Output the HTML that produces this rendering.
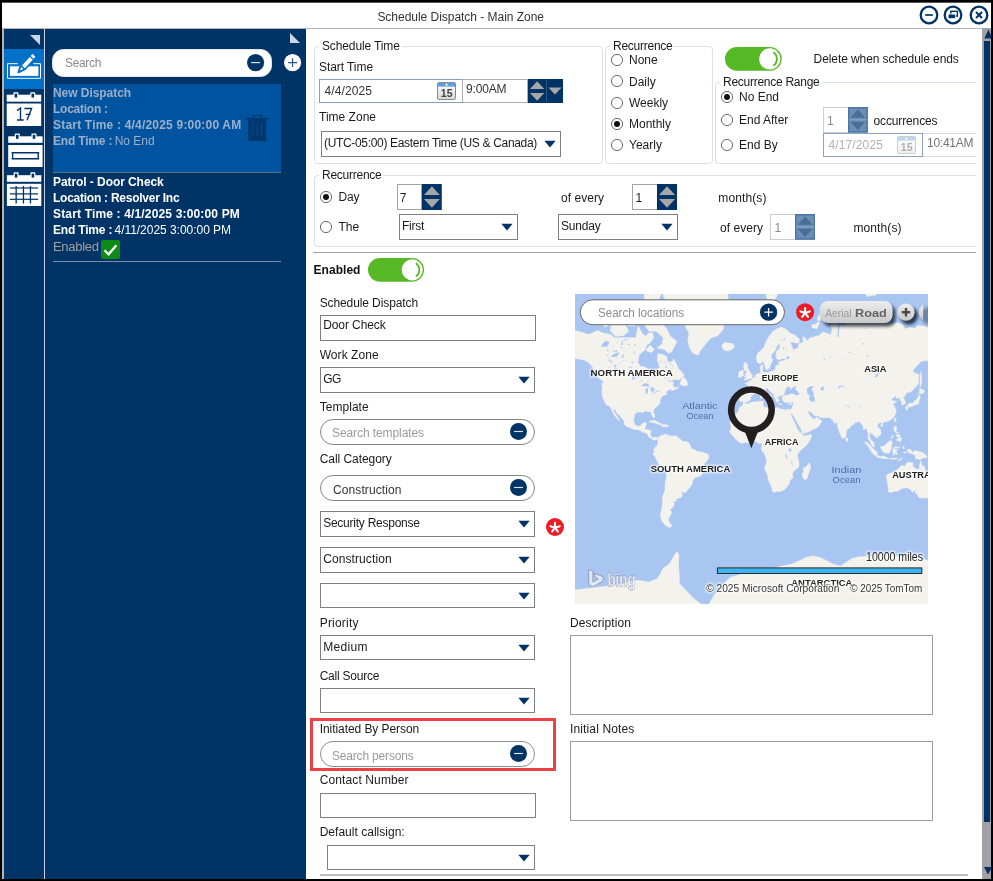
<!DOCTYPE html>
<html><head><meta charset="utf-8"><title>Schedule Dispatch - Main Zone</title>
<style>
html,body{margin:0;padding:0;}
body{width:993px;height:881px;background:#000;overflow:hidden;position:relative;font-family:"Liberation Sans",sans-serif;}
.a{position:absolute;display:block;}
svg{will-change:transform;}
.t{position:absolute;white-space:nowrap;font-family:"Liberation Sans",sans-serif;}
#tx{position:absolute;left:0;top:0;width:975.5px;height:881px;overflow:hidden;will-change:transform;transform:translateZ(0);}
</style></head><body>
<div class="a" style="left:2px;top:3px;width:989px;height:876px;background:#fff;"></div>
<div class="a" style="left:2px;top:2px;width:989px;height:1px;background:#555;"></div>
<div class="a" style="left:2px;top:28px;width:989px;height:1px;background:#b4b4b4;"></div>
<svg class="a" style="left:917.6px;top:3.5px" width="22" height="22" viewBox="-11 -11 22 22"><circle r="8.3" fill="#fff" stroke="#003366" stroke-width="2.3"/><line x1="-3.8" x2="3.8" y1="0" y2="0" stroke="#003366" stroke-width="1.7"/></svg>
<svg class="a" style="left:942.4px;top:3.5px" width="22" height="22" viewBox="-11 -11 22 22"><circle r="8.3" fill="#fff" stroke="#003366" stroke-width="2.3"/><rect x="-2.2" y="-3.7" width="6.6" height="4.8" fill="none" stroke="#003366" stroke-width="1.4"/><rect x="-4.9" y="-0.9" width="7.2" height="4.5" fill="#003366" stroke="#fff" stroke-width="0.7"/></svg>
<svg class="a" style="left:968.4px;top:3.5px" width="22" height="22" viewBox="-11 -11 22 22"><circle r="8.3" fill="#fff" stroke="#003366" stroke-width="2.3"/><path d="M-3 -3 L3 3 M3 -3 L-3 3" stroke="#003366" stroke-width="2"/></svg>
<div class="a" style="left:2px;top:28px;width:2px;height:851px;background:#b4b4b4;"></div>
<div class="a" style="left:4px;top:29px;width:302px;height:850px;background:#003366;"></div>
<div class="a" style="left:44px;top:29px;width:1px;height:850px;background:#c9d0e6;"></div>
<svg class="a" style="left:29px;top:34px" width="12" height="12" viewBox="29 34 12 12"><path d="M30 35 L40 35 L40 45 Z" fill="#cdd6e2"/></svg>
<div class="a" style="left:4px;top:49px;width:40px;height:40px;background:#0070c8;"></div>
<svg class="a" style="left:4px;top:49px" width="40" height="40" viewBox="4 49 40 40">
<path d="M17.8 63.7 H7.5 V78.3 H40.5 V63.7 H33.2" fill="none" stroke="#fff" stroke-width="1"/>
<rect x="9.9" y="66.3" width="28.5" height="9.6" fill="#fff"/>
<g transform="translate(18.8 71.8) rotate(-47.3)">
<path d="M-0.6 0 L5.6 -2.6 L23.2 -2.6 L23.2 2.6 L5.6 2.6 Z" fill="#0070c8" stroke="#0070c8" stroke-width="2" stroke-linejoin="round"/>
<path d="M1.6 0 L5.2 -1.5 L5.2 1.5 Z" fill="#fff"/>
<rect x="6.8" y="-2" width="11.6" height="4" fill="#fff"/>
<rect x="19.6" y="-2" width="2.8" height="4" fill="#fff"/>
</g>
</svg>
<svg class="a" style="left:4px;top:89px" width="40" height="120" viewBox="4 89 40 120"><rect x="6.7" y="94.7" width="34.5" height="7.0" fill="#fff"/><rect x="6.7" y="103.5" width="34.5" height="22.5" fill="#fff"/><rect x="13.4" y="92.2" width="5" height="3.5" rx="0.8" fill="#fff"/><rect x="14.6" y="93.60000000000001" width="2.6" height="4" fill="#003366"/><rect x="30.3" y="92.2" width="5" height="3.5" rx="0.8" fill="#fff"/><rect x="31.5" y="93.60000000000001" width="2.6" height="4" fill="#003366"/><path d="M17 110.6 L20.5 108 V120 M17 120 H23.7 M24.4 108.5 H31.6 L27 120.3 M25.8 114.4 H30.6" fill="none" stroke="#003366" stroke-width="1.35"/><rect x="8.2" y="136.3" width="34.400000000000006" height="6.5" fill="#fff"/><rect x="8.2" y="145" width="34.400000000000006" height="22" fill="#fff"/><rect x="14.8" y="133.4" width="5" height="3.9000000000000057" rx="0.8" fill="#fff"/><rect x="16.0" y="134.8" width="2.6" height="4" fill="#003366"/><rect x="31.5" y="133.4" width="5" height="3.9000000000000057" rx="0.8" fill="#fff"/><rect x="32.7" y="134.8" width="2.6" height="4" fill="#003366"/><path d="M11.6 152.7 H39.2 M11.6 158.7 H39.2 M12.6 152.7 V158.7 M38.2 152.7 V158.7" fill="none" stroke="#003366" stroke-width="1.4"/><rect x="6.9" y="175.2" width="34.4" height="6.600000000000023" fill="#fff"/><rect x="6.9" y="183.8" width="34.4" height="22.19999999999999" fill="#fff"/><rect x="13.6" y="172.2" width="5" height="4.0" rx="0.8" fill="#fff"/><rect x="14.799999999999999" y="173.6" width="2.6" height="4" fill="#003366"/><rect x="30.4" y="172.2" width="5" height="4.0" rx="0.8" fill="#fff"/><rect x="31.599999999999998" y="173.6" width="2.6" height="4" fill="#003366"/><rect x="15.500000000000002" y="186" width="1.3" height="17.5" fill="#003366"/><rect x="22.799999999999997" y="186" width="1.3" height="17.5" fill="#003366"/><rect x="29.799999999999997" y="186" width="1.3" height="17.5" fill="#003366"/><rect x="9.9" y="187.4" width="28.2" height="1.2" fill="#003366"/><rect x="9.9" y="193.3" width="28.2" height="1.2" fill="#003366"/><rect x="9.9" y="198.70000000000002" width="28.2" height="1.2" fill="#003366"/></svg>
<svg class="a" style="left:289px;top:32px" width="12" height="12" viewBox="289 32 12 12"><path d="M290 33 L300 43 L290 43 Z" fill="#cdd6e2"/></svg>
<div class="a" style="left:52px;top:49px;width:220px;height:28px;border:1px solid #e8e8e8;background:#fff;box-sizing:border-box;border-radius:11.5px;"></div>
<svg class="a" style="left:246.0px;top:53.4px" width="19.2" height="19.2" viewBox="-9.6 -9.6 19.2 19.2"><circle r="8.6" fill="#003366"/><line x1="-4.47" y1="0" x2="4.47" y2="0" stroke="#e3e9f2" stroke-width="1.15"/></svg>
<svg class="a" style="left:283.0px;top:53.4px" width="19.2" height="19.2" viewBox="-9.6 -9.6 19.2 19.2"><circle r="8.6" fill="#fff"/><path d="M-4.47 0 H4.47 M0 -4.47 V4.47" stroke="#2b5587" stroke-width="1.15" fill="none"/></svg>
<div class="a" style="left:53px;top:84px;width:228px;height:88px;background:#00539f;"></div>
<svg class="a" style="left:245px;top:114px" width="25" height="28" viewBox="245 114 25 28">
<rect x="245.4" y="117.9" width="23.6" height="1.3" fill="#00376f"/>
<rect x="253.3" y="115.6" width="8.4" height="3" fill="none" stroke="#00376f" stroke-width="1.1"/>
<rect x="248.2" y="119.2" width="17.9" height="21.8" fill="#00376f"/>
<path d="M253 122.6 V135.6 M257.2 122.6 V135.6 M261.4 122.6 V135.6" stroke="#004c90" stroke-width="1.1"/>
</svg>
<div class="a" style="left:53px;top:172px;width:228px;height:1px;background:#5f7186;"></div>
<svg class="a" style="left:101px;top:239.5px" width="19" height="19" viewBox="0 0 19 19"><rect width="19" height="19" rx="2" fill="#0e8a16"/><path d="M3.6 10.2 L7.6 14.2 L15.4 5.2" fill="none" stroke="#fff" stroke-width="2.3"/></svg>
<div class="a" style="left:53px;top:260.5px;width:228px;height:1.0px;background:#7d8fa8;"></div>
<div class="a" id="main" style="left:306px;top:28px;width:669.5px;height:851px;overflow:hidden"><div class="a" style="left:-306px;top:-28px;width:993px;height:881px">
<div class="a" style="left:314px;top:46px;width:289px;height:118px;border:1px solid #d9e2ea;border-radius:4px;box-sizing:border-box;"></div><div class="a" style="left:319px;top:45px;width:83px;height:3px;background:#fff;"></div>
<div class="a" style="left:319px;top:79px;width:144px;height:24px;border:1px solid #8c9fbd;background:#fff;box-sizing:border-box;"></div>
<svg class="a" style="left:437.3px;top:81.8px;" width="19" height="18" viewBox="0 0 19 18">
<defs><linearGradient id="cg437" x1="0" y1="0" x2="0" y2="1"><stop offset="0" stop-color="#fff"/><stop offset="1" stop-color="#d8d8d8"/></linearGradient></defs>
<rect x="0.5" y="0.5" width="18" height="17" rx="1.5" fill="url(#cg437)" stroke="#8a8a8a"/>
<rect x="1" y="1" width="17" height="3.6" fill="#5f9fe0"/>
<circle cx="9.5" cy="2.7" r="1.1" fill="#fff"/>
<text x="9.7" y="15" font-family="Liberation Sans" font-size="10.5" font-weight="700" fill="#444" text-anchor="middle">15</text>
</svg>
<div class="a" style="left:462px;top:79px;width:66px;height:24px;border:1px solid #abadb3;background:#fff;box-sizing:border-box;"></div>
<svg class="a" style="left:527.7px;top:79px" width="18.299999999999955" height="24" viewBox="0 0 18.299999999999955 24"><rect width="18.299999999999955" height="24" fill="#003366"/><path d="M2 10.0 L16.299999999999955 10.0 L9.149999999999977 2.2 Z" fill="#a6a6a6"/><path d="M2 14.0 L16.299999999999955 14.0 L9.149999999999977 21.8 Z" fill="#a6a6a6"/></svg>
<svg class="a" style="left:546px;top:79px" width="17" height="24" viewBox="0 0 17 24"><rect width="17" height="24" fill="#003366"/><rect width="1" height="24" fill="#2d5688"/><path d="M2.4 8.4 L15.6 8.4 L9 15.6 Z" fill="#a6a6a6"/></svg>
<div class="a" style="left:320.5px;top:131px;width:240.5px;height:25.5px;border:1px solid #7f7f7f;background:#fff;box-sizing:border-box;"></div><svg class="a" style="left:544px;top:139.75px" width="12" height="8" viewBox="0 0 12 8"><path d="M0.3 0.8 L11.7 0.8 L6 7.4 Z" fill="#003366"/></svg>
<div class="a" style="left:605px;top:46px;width:108px;height:118px;border:1px solid #d9e2ea;border-radius:4px;box-sizing:border-box;"></div><div class="a" style="left:610px;top:45px;width:64px;height:3px;background:#fff;"></div>
<svg class="a" style="left:609.5px;top:52.8px" width="14" height="14" viewBox="-7 -7 14 14"><circle r="5.6" fill="#fff" stroke="#5a5a5a" stroke-width="0.9"/></svg>
<svg class="a" style="left:609.5px;top:74.2px" width="14" height="14" viewBox="-7 -7 14 14"><circle r="5.6" fill="#fff" stroke="#5a5a5a" stroke-width="0.9"/></svg>
<svg class="a" style="left:609.5px;top:95.5px" width="14" height="14" viewBox="-7 -7 14 14"><circle r="5.6" fill="#fff" stroke="#5a5a5a" stroke-width="0.9"/></svg>
<svg class="a" style="left:609.5px;top:116.7px" width="14" height="14" viewBox="-7 -7 14 14"><circle r="5.6" fill="#fff" stroke="#5a5a5a" stroke-width="0.9"/><circle r="3" fill="#111"/></svg>
<svg class="a" style="left:609.5px;top:137.9px" width="14" height="14" viewBox="-7 -7 14 14"><circle r="5.6" fill="#fff" stroke="#5a5a5a" stroke-width="0.9"/></svg>
<svg class="a" style="left:725.3px;top:47px" width="56.700000000000045" height="23.799999999999997" viewBox="0 0 56.700000000000045 23.799999999999997"><rect width="56.700000000000045" height="23.799999999999997" rx="11.899999999999999" fill="#56b824"/><circle cx="44.80000000000005" cy="11.899999999999999" r="10.599999999999998" fill="#fff"/><path d="M48.40000000000005 5.299999999999999 A 8 8 0 0 1 48.40000000000005 18.5" fill="none" stroke="#56b824" stroke-width="1.8"/></svg>
<div class="a" style="left:715px;top:82px;width:275px;height:82px;border:1px solid #d9e2ea;border-radius:4px;box-sizing:border-box;border-right:none;border-top-right-radius:0;border-bottom-right-radius:0;"></div><div class="a" style="left:720px;top:81px;width:102px;height:3px;background:#fff;"></div>
<svg class="a" style="left:719.5px;top:89.5px" width="14" height="14" viewBox="-7 -7 14 14"><circle r="5.6" fill="#fff" stroke="#5a5a5a" stroke-width="0.9"/><circle r="3" fill="#111"/></svg>
<svg class="a" style="left:719.5px;top:113px" width="14" height="14" viewBox="-7 -7 14 14"><circle r="5.6" fill="#fff" stroke="#5a5a5a" stroke-width="0.9"/></svg>
<svg class="a" style="left:719.5px;top:137.5px" width="14" height="14" viewBox="-7 -7 14 14"><circle r="5.6" fill="#fff" stroke="#5a5a5a" stroke-width="0.9"/></svg>
<div class="a" style="left:823px;top:107.2px;width:26px;height:25.60000000000001px;border:1px solid #c9cdd4;background:#fff;box-sizing:border-box;"></div>
<svg class="a" style="left:848.4px;top:107.2px" width="19.800000000000068" height="25.60000000000001" viewBox="0 0 19.800000000000068 25.60000000000001"><rect width="19.800000000000068" height="25.60000000000001" fill="#6c8db6"/><rect x="0.75" y="0.75" width="18.300000000000068" height="24.10000000000001" fill="none" stroke="#4b76a6" stroke-width="1.5"/><rect x="1" y="12.200000000000005" width="17.800000000000068" height="1.2" fill="#86a3c6"/><path d="M2.6 10.800000000000004 L17.200000000000067 10.800000000000004 L9.900000000000034 2.6 Z" fill="#4a6c96"/><path d="M2.6 14.800000000000004 L17.200000000000067 14.800000000000004 L9.900000000000034 23.000000000000007 Z" fill="#4a6c96"/></svg>
<div class="a" style="left:823px;top:133px;width:100px;height:23.5px;border:1px solid #8ea2be;background:#fff;box-sizing:border-box;"></div>
<svg class="a" style="left:897.3px;top:135.6px;opacity:.42;" width="19" height="18" viewBox="0 0 19 18">
<defs><linearGradient id="cg897" x1="0" y1="0" x2="0" y2="1"><stop offset="0" stop-color="#fff"/><stop offset="1" stop-color="#d8d8d8"/></linearGradient></defs>
<rect x="0.5" y="0.5" width="18" height="17" rx="1.5" fill="url(#cg897)" stroke="#8a8a8a"/>
<rect x="1" y="1" width="17" height="3.6" fill="#5f9fe0"/>
<circle cx="9.5" cy="2.7" r="1.1" fill="#fff"/>
<text x="9.7" y="15" font-family="Liberation Sans" font-size="10.5" font-weight="700" fill="#444" text-anchor="middle">15</text>
</svg>
<div class="a" style="left:923px;top:133px;width:67px;height:1px;background:#d6d9de;"></div>
<div class="a" style="left:923px;top:155.5px;width:67px;height:1.0px;background:#d6d9de;"></div>
<div class="a" style="left:314px;top:175px;width:676px;height:71.5px;border:1px solid #d9e2ea;border-radius:4px;box-sizing:border-box;border-right:none;border-top-right-radius:0;border-bottom-right-radius:0;"></div><div class="a" style="left:319px;top:174px;width:64px;height:3px;background:#fff;"></div>
<svg class="a" style="left:319px;top:189.5px" width="14" height="14" viewBox="-7 -7 14 14"><circle r="5.6" fill="#fff" stroke="#5a5a5a" stroke-width="0.9"/><circle r="3" fill="#111"/></svg>
<svg class="a" style="left:319px;top:219.5px" width="14" height="14" viewBox="-7 -7 14 14"><circle r="5.6" fill="#fff" stroke="#5a5a5a" stroke-width="0.9"/></svg>
<div class="a" style="left:397px;top:184px;width:25px;height:26px;border:1px solid #a3a3a3;background:#fff;box-sizing:border-box;"></div>
<svg class="a" style="left:421.6px;top:184px" width="19.799999999999955" height="26" viewBox="0 0 19.799999999999955 26"><rect width="19.799999999999955" height="26" fill="#003366"/><path d="M2 11.0 L17.799999999999955 11.0 L9.899999999999977 2.2 Z" fill="#a6a6a6"/><path d="M2 15.0 L17.799999999999955 15.0 L9.899999999999977 23.8 Z" fill="#a6a6a6"/></svg>
<div class="a" style="left:398.5px;top:214px;width:119.70000000000005px;height:26px;border:1px solid #7f7f7f;background:#fff;box-sizing:border-box;"></div><svg class="a" style="left:501.20000000000005px;top:223.0px" width="12" height="8" viewBox="0 0 12 8"><path d="M0.3 0.8 L11.7 0.8 L6 7.4 Z" fill="#003366"/></svg>
<div class="a" style="left:632.3px;top:184px;width:25.700000000000045px;height:26px;border:1px solid #a3a3a3;background:#fff;box-sizing:border-box;"></div>
<svg class="a" style="left:657.3px;top:184px" width="20.100000000000023" height="26" viewBox="0 0 20.100000000000023 26"><rect width="20.100000000000023" height="26" fill="#003366"/><path d="M2 11.0 L18.100000000000023 11.0 L10.050000000000011 2.2 Z" fill="#a6a6a6"/><path d="M2 15.0 L18.100000000000023 15.0 L10.050000000000011 23.8 Z" fill="#a6a6a6"/></svg>
<div class="a" style="left:557.7px;top:214px;width:120.09999999999991px;height:26px;border:1px solid #7f7f7f;background:#fff;box-sizing:border-box;"></div><svg class="a" style="left:660.8px;top:223.0px" width="12" height="8" viewBox="0 0 12 8"><path d="M0.3 0.8 L11.7 0.8 L6 7.4 Z" fill="#003366"/></svg>
<div class="a" style="left:770px;top:214px;width:26px;height:25.69999999999999px;border:1px solid #c9cdd4;background:#fff;box-sizing:border-box;"></div>
<svg class="a" style="left:795px;top:214px" width="20.200000000000045" height="25.69999999999999" viewBox="0 0 20.200000000000045 25.69999999999999"><rect width="20.200000000000045" height="25.69999999999999" fill="#6c8db6"/><rect x="0.75" y="0.75" width="18.700000000000045" height="24.19999999999999" fill="none" stroke="#4b76a6" stroke-width="1.5"/><rect x="1" y="12.249999999999995" width="18.200000000000045" height="1.2" fill="#86a3c6"/><path d="M2.6 10.849999999999994 L17.600000000000044 10.849999999999994 L10.100000000000023 2.6 Z" fill="#4a6c96"/><path d="M2.6 14.849999999999994 L17.600000000000044 14.849999999999994 L10.100000000000023 23.099999999999987 Z" fill="#4a6c96"/></svg>
<div class="a" style="left:313px;top:251.5px;width:677px;height:1.5px;background:#a3a3a3;"></div>
<svg class="a" style="left:367.6px;top:257.5px" width="56.099999999999966" height="23.69999999999999" viewBox="0 0 56.099999999999966 23.69999999999999"><rect width="56.099999999999966" height="23.69999999999999" rx="11.849999999999994" fill="#56b824"/><circle cx="44.24999999999997" cy="11.849999999999994" r="10.549999999999994" fill="#fff"/><path d="M47.84999999999997 5.249999999999995 A 8 8 0 0 1 47.84999999999997 18.449999999999996" fill="none" stroke="#56b824" stroke-width="1.8"/></svg>
<div class="a" style="left:319.7px;top:315.3px;width:215.90000000000003px;height:25.30000000000001px;border:1px solid #7f7f7f;background:#fff;box-sizing:border-box;"></div>
<div class="a" style="left:319.7px;top:367.4px;width:215.59999999999997px;height:25.400000000000034px;border:1px solid #7f7f7f;background:#fff;box-sizing:border-box;"></div><svg class="a" style="left:518.3px;top:376.1px" width="12" height="8" viewBox="0 0 12 8"><path d="M0.3 0.8 L11.7 0.8 L6 7.4 Z" fill="#003366"/></svg>
<div class="a" style="left:320px;top:419px;width:215.29999999999995px;height:26px;border:1px solid #858585;background:#fff;box-sizing:border-box;border-radius:13.0px;"></div>
<svg class="a" style="left:509.0px;top:422.0px" width="19.0" height="19.0" viewBox="-9.5 -9.5 19.0 19.0"><circle r="8.5" fill="#003366"/><line x1="-4.42" y1="0" x2="4.42" y2="0" stroke="#e3e9f2" stroke-width="1.15"/></svg>
<div class="a" style="left:320px;top:475px;width:215.29999999999995px;height:26px;border:1px solid #858585;background:#fff;box-sizing:border-box;border-radius:13.0px;"></div>
<svg class="a" style="left:509.0px;top:478.3px" width="19.0" height="19.0" viewBox="-9.5 -9.5 19.0 19.0"><circle r="8.5" fill="#003366"/><line x1="-4.42" y1="0" x2="4.42" y2="0" stroke="#e3e9f2" stroke-width="1.15"/></svg>
<div class="a" style="left:319.7px;top:511.3px;width:215.59999999999997px;height:25.400000000000034px;border:1px solid #7f7f7f;background:#fff;box-sizing:border-box;"></div><svg class="a" style="left:518.3px;top:520.0px" width="12" height="8" viewBox="0 0 12 8"><path d="M0.3 0.8 L11.7 0.8 L6 7.4 Z" fill="#003366"/></svg>
<div class="a" style="left:319.7px;top:547.2px;width:215.59999999999997px;height:25.399999999999977px;border:1px solid #7f7f7f;background:#fff;box-sizing:border-box;"></div><svg class="a" style="left:518.3px;top:555.9000000000001px" width="12" height="8" viewBox="0 0 12 8"><path d="M0.3 0.8 L11.7 0.8 L6 7.4 Z" fill="#003366"/></svg>
<div class="a" style="left:319.7px;top:583px;width:215.59999999999997px;height:25.399999999999977px;border:1px solid #7f7f7f;background:#fff;box-sizing:border-box;"></div><svg class="a" style="left:518.3px;top:591.7px" width="12" height="8" viewBox="0 0 12 8"><path d="M0.3 0.8 L11.7 0.8 L6 7.4 Z" fill="#003366"/></svg>
<svg class="a" style="left:545px;top:516.7px" width="20" height="20" viewBox="-10 -10 20 20"><circle r="9" fill="#ed1c24"/><line x1="0" y1="0.7" x2="0.00" y2="-4.20" stroke="#fff" stroke-width="2.1" stroke-linecap="round"/><line x1="0" y1="0.7" x2="4.66" y2="-0.81" stroke="#fff" stroke-width="2.1" stroke-linecap="round"/><line x1="0" y1="0.7" x2="2.88" y2="4.66" stroke="#fff" stroke-width="2.1" stroke-linecap="round"/><line x1="0" y1="0.7" x2="-2.88" y2="4.66" stroke="#fff" stroke-width="2.1" stroke-linecap="round"/><line x1="0" y1="0.7" x2="-4.66" y2="-0.81" stroke="#fff" stroke-width="2.1" stroke-linecap="round"/></svg>
<div class="a" style="left:319.7px;top:635.3px;width:215.59999999999997px;height:25.0px;border:1px solid #7f7f7f;background:#fff;box-sizing:border-box;"></div><svg class="a" style="left:518.3px;top:643.8px" width="12" height="8" viewBox="0 0 12 8"><path d="M0.3 0.8 L11.7 0.8 L6 7.4 Z" fill="#003366"/></svg>
<div class="a" style="left:319.7px;top:688.3px;width:215.59999999999997px;height:25.200000000000045px;border:1px solid #7f7f7f;background:#fff;box-sizing:border-box;"></div><svg class="a" style="left:518.3px;top:696.9px" width="12" height="8" viewBox="0 0 12 8"><path d="M0.3 0.8 L11.7 0.8 L6 7.4 Z" fill="#003366"/></svg>
<div class="a" style="left:310px;top:718px;width:246px;height:52.5px;border:3px solid #ee4146;box-sizing:border-box;"></div>
<div class="a" style="left:320px;top:741px;width:215.29999999999995px;height:26px;border:1px solid #8f8f8f;background:#fff;box-sizing:border-box;border-radius:13.0px;"></div>
<svg class="a" style="left:509.0px;top:744.3px" width="19.0" height="19.0" viewBox="-9.5 -9.5 19.0 19.0"><circle r="8.5" fill="#003366"/><line x1="-4.42" y1="0" x2="4.42" y2="0" stroke="#e3e9f2" stroke-width="1.15"/></svg>
<div class="a" style="left:319.7px;top:792.7px;width:215.90000000000003px;height:25.0px;border:1px solid #7f7f7f;background:#fff;box-sizing:border-box;"></div>
<div class="a" style="left:326.8px;top:845px;width:208.49999999999994px;height:25.399999999999977px;border:1px solid #7f7f7f;background:#fff;box-sizing:border-box;"></div><svg class="a" style="left:518.3px;top:853.7px" width="12" height="8" viewBox="0 0 12 8"><path d="M0.3 0.8 L11.7 0.8 L6 7.4 Z" fill="#003366"/></svg>
<div class="a" style="left:320px;top:874px;width:648px;height:1.7000000000000455px;background:#bdbdbd;"></div>
<div class="a" style="left:570px;top:635px;width:363.4px;height:79.79999999999995px;border:1px solid #9c9c9c;background:#fff;box-sizing:border-box;"></div>
<div class="a" style="left:570px;top:741px;width:363.4px;height:79.79999999999995px;border:1px solid #9c9c9c;background:#fff;box-sizing:border-box;"></div>
<svg class="a" id="map" style="left:575px;top:293.5px" width="353" height="310.0" viewBox="0 0 353 310.0" font-family="Liberation Sans, sans-serif">
<defs><filter id="mb" x="-5%" y="-5%" width="110%" height="110%"><feGaussianBlur stdDeviation="0.7"/></filter>
<filter id="halo" x="-10%" y="-30%" width="120%" height="160%"><feGaussianBlur stdDeviation="0.8"/></filter>
<filter id="sh" x="-30%" y="-50%" width="180%" height="250%"><feGaussianBlur stdDeviation="1.8"/></filter>
<linearGradient id="bg1" x1="0" y1="0" x2="0" y2="1"><stop offset="0" stop-color="#ededed"/><stop offset="1" stop-color="#c9c9c9"/></linearGradient>
<clipPath id="mc"><rect width="353" height="310.0"/></clipPath></defs>
<rect width="353" height="310.0" fill="#a9c6f2"/>
<g clip-path="url(#mc)"><g filter="url(#mb)">
<path fill="#f4f2ec" stroke="#f4f2ec" stroke-width="0.6" stroke-linejoin="round" d="M-25.3 51.2 L-22.9 42.8 L-18.1 36.5 L-11.5 32.5 L-3.8 35.4 L7.0 38.5 L14.2 40.5 L22.5 36.5 L27.3 38.9 L35.7 40.5 L39.3 43.8 L46.4 43.8 L53.6 43.8 L60.8 43.8 L63.2 31.8 L66.8 38.9 L70.3 42.2 L73.9 38.9 L77.5 38.9 L78.7 43.8 L75.1 48.9 L71.5 51.2 L70.3 55.4 L64.4 60.6 L62.6 67.8 L65.0 72.2 L70.3 73.3 L73.9 75.8 L77.5 76.5 L77.5 80.5 L79.3 83.7 L81.1 82.4 L81.7 77.5 L83.5 74.4 L84.1 70.0 L82.3 66.6 L82.9 59.8 L88.3 60.6 L91.9 63.1 L92.4 67.8 L96.6 68.2 L98.4 64.8 L101.4 70.0 L103.8 75.4 L107.4 78.5 L108.9 81.5 L107.4 83.6 L103.8 85.8 L99.0 85.6 L95.4 87.1 L92.4 90.1 L96.6 87.8 L98.7 88.3 L97.8 90.6 L98.4 92.9 L102.6 93.9 L103.8 92.4 L102.6 94.6 L99.0 95.7 L96.6 97.2 L97.2 95.7 L95.4 94.9 L91.9 97.1 L91.0 99.8 L91.9 100.3 L87.1 102.0 L85.3 105.2 L84.7 107.4 L85.0 109.6 L82.3 111.9 L78.7 115.3 L78.3 118.0 L79.7 121.4 L79.5 123.6 L78.1 123.4 L76.7 120.3 L75.7 117.6 L73.3 117.6 L70.3 116.8 L68.5 118.4 L66.2 118.0 L62.6 118.0 L59.6 120.1 L59.0 123.4 L58.6 127.2 L60.2 131.0 L62.6 132.5 L65.6 132.0 L67.4 129.4 L70.3 128.5 L71.5 128.8 L70.7 132.3 L69.5 135.4 L72.7 135.6 L76.0 136.6 L75.5 139.6 L75.7 142.0 L77.5 143.8 L79.9 143.6 L82.3 143.5 L83.1 144.4 L82.1 145.6 L79.3 145.9 L76.9 144.8 L73.9 142.9 L72.7 140.8 L70.9 139.0 L68.0 138.2 L64.4 136.0 L62.0 135.4 L59.6 135.6 L56.0 134.1 L51.8 132.5 L49.4 130.4 L49.4 127.2 L46.4 123.6 L44.0 120.7 L41.1 118.0 L40.1 115.6 L38.3 115.0 L38.6 117.4 L41.1 120.7 L43.5 124.7 L44.6 126.6 L43.5 126.0 L41.3 123.4 L38.7 120.3 L37.5 117.4 L35.7 113.9 L33.9 111.8 L31.4 111.1 L29.7 107.7 L29.1 106.3 L27.3 102.5 L27.0 98.2 L27.3 92.9 L26.5 89.2 L28.5 90.6 L28.5 88.0 L26.1 85.6 L23.1 83.4 L20.1 77.5 L17.8 73.3 L14.2 68.9 L10.6 66.6 L7.0 65.5 L2.2 64.8 L-1.4 64.3 L-3.8 67.1 L-6.1 63.6 L-8.5 68.9 L-12.1 72.2 L-16.9 76.1 L-21.1 77.3 L-18.1 74.4 L-13.3 69.6 L-15.7 68.2 L-18.1 66.6 L-21.7 63.1 L-22.9 59.3 L-21.1 57.5 L-16.9 55.4 L-18.1 52.7 L-22.9 53.8Z M104.6 90.3 L106.8 84.9 L109.2 83.2 L112.2 88.0 L112.5 91.2 L109.8 91.9Z M79.9 23.1 L84.7 26.8 L90.7 33.6 L95.4 42.2 L102.0 47.7 L99.0 53.2 L96.6 58.0 L93.6 59.3 L89.5 55.4 L82.3 54.0 L87.1 49.8 L88.3 43.8 L81.1 37.2 L73.9 37.2 L69.1 29.9 L73.9 23.1Z M35.7 33.6 L38.1 26.0 L46.4 26.0 L50.0 29.9 L53.6 37.2 L48.8 41.5 L40.5 42.2 L35.7 37.2Z M26.1 29.9 L28.5 21.8 L35.7 21.8 L36.9 28.0 L30.9 32.9Z M71.5 55.4 L75.1 51.2 L79.3 55.4 L76.3 58.6 L71.5 56.7Z M65.6 10.2 L79.9 12.7 L79.9 18.8 L65.6 19.7Z M35.7 12.7 L48.8 11.2 L50.0 18.3 L40.5 19.7 L35.7 16.5Z M68.0 -10.2 L70.3 10.2 L82.3 10.2 L87.1 -3.7 L91.9 -25.4Z M53.6 22.7 L59.6 22.7 L59.6 31.8 L53.6 31.8Z M61.4 21.8 L67.4 21.8 L66.8 29.9 L61.4 29.9Z M88.3 2.2 L95.4 12.7 L103.8 15.1 L108.0 23.9 L111.0 33.6 L114.0 38.9 L112.8 46.8 L114.6 54.0 L117.5 58.6 L121.1 60.6 L123.5 60.6 L125.3 56.7 L130.1 50.4 L136.1 43.8 L143.2 41.5 L148.0 35.4 L149.2 28.0 L152.2 17.4 L153.4 7.6 L151.6 -10.2 L151.6 -34.4 L88.3 -34.4Z M146.8 51.2 L149.2 48.6 L154.0 49.2 L158.2 49.8 L159.4 52.7 L157.6 54.9 L152.8 57.0 L148.6 55.9Z M73.9 127.9 L76.9 126.5 L79.9 126.6 L83.5 128.5 L86.8 130.2 L82.9 130.5 L82.3 129.7 L78.7 128.4 L75.1 128.1Z M86.6 130.8 L89.5 130.5 L92.0 130.9 L93.8 132.2 L90.7 132.7 L86.6 132.4Z M83.1 144.4 L85.3 141.9 L88.3 141.1 L90.1 139.8 L90.1 141.4 L91.9 140.1 L94.2 141.9 L99.0 142.0 L101.4 141.8 L102.6 143.2 L105.6 145.6 L107.4 147.4 L111.0 147.6 L114.0 149.2 L115.8 152.7 L116.9 154.9 L118.7 155.3 L122.3 157.5 L125.9 157.9 L129.5 159.0 L133.3 160.6 L133.9 163.4 L131.3 167.6 L128.9 170.0 L128.9 175.5 L127.1 179.2 L126.5 181.1 L123.5 182.4 L119.9 183.7 L117.5 186.9 L117.3 189.6 L115.2 193.0 L112.8 195.8 L111.6 197.6 L109.8 198.5 L106.8 197.9 L105.7 197.6 L107.4 200.5 L106.5 203.3 L101.4 204.6 L101.1 207.3 L97.8 207.6 L99.4 210.0 L97.6 213.3 L94.8 215.8 L96.9 218.4 L94.2 222.8 L93.0 226.0 L93.9 227.4 L97.2 232.1 L94.2 233.6 L90.7 231.5 L87.1 227.5 L85.3 221.0 L86.5 215.8 L87.7 209.2 L87.4 204.6 L88.3 200.8 L90.1 195.8 L90.1 190.3 L91.3 183.7 L91.6 177.3 L90.7 175.9 L85.9 173.0 L84.1 170.6 L82.3 167.0 L80.1 162.8 L78.3 160.4 L78.7 158.6 L79.9 157.5 L78.7 155.7 L79.9 153.6 L81.3 152.7 L82.9 149.8 L82.9 146.2Z M168.4 109.2 L173.1 110.1 L176.7 108.2 L181.5 107.7 L187.2 107.0 L188.6 107.4 L187.8 111.1 L189.2 112.9 L193.4 114.1 L198.2 117.0 L199.4 114.6 L203.0 113.6 L205.4 115.0 L210.2 116.0 L212.5 115.3 L214.3 115.7 L216.4 115.6 L217.1 118.0 L216.5 120.1 L215.5 120.1 L217.9 125.3 L219.7 129.1 L221.5 132.9 L222.7 136.0 L225.1 138.4 L227.2 140.0 L227.2 140.8 L229.3 142.0 L232.9 141.2 L236.7 140.5 L236.2 143.2 L234.1 147.4 L231.7 151.0 L228.1 153.9 L225.7 156.3 L223.9 158.0 L222.5 161.0 L222.7 164.0 L223.9 167.6 L223.9 172.4 L220.9 175.5 L218.5 177.3 L217.3 179.9 L217.9 183.7 L214.9 186.3 L214.3 189.6 L211.9 193.0 L209.0 195.8 L206.0 197.2 L201.8 197.5 L199.4 198.3 L197.5 197.5 L197.0 194.4 L195.2 189.6 L193.4 186.3 L192.8 181.8 L190.4 176.1 L189.6 173.6 L191.6 168.8 L191.4 165.2 L190.2 161.6 L189.2 159.2 L186.9 156.9 L186.3 153.9 L187.1 151.5 L186.9 149.8 L185.7 149.1 L183.9 149.3 L182.1 148.6 L180.9 147.1 L177.3 147.2 L174.3 148.4 L171.9 148.6 L169.5 148.4 L166.5 149.3 L164.1 148.0 L161.8 146.3 L159.7 144.4 L159.4 143.0 L157.6 141.4 L155.5 139.6 L154.6 137.0 L155.8 135.4 L156.0 131.7 L155.2 129.1 L156.4 126.0 L158.2 122.7 L160.0 120.3 L163.5 118.0 L163.9 115.3 L165.3 112.8 L167.4 111.7Z M234.4 168.8 L235.6 173.0 L234.7 176.1 L232.6 182.4 L231.7 185.0 L229.3 185.6 L227.7 182.4 L227.5 179.9 L228.7 177.3 L228.1 174.2 L231.1 173.0 L232.9 170.6Z M164.7 104.9 L165.0 101.4 L164.4 98.2 L165.9 97.1 L169.5 97.4 L173.3 97.5 L174.1 93.2 L172.5 91.0 L169.9 89.2 L173.7 88.5 L173.6 86.9 L175.5 87.1 L177.4 84.5 L179.7 83.6 L181.1 80.5 L183.9 79.5 L185.9 78.7 L185.4 75.4 L185.3 72.2 L188.0 70.7 L187.8 74.4 L187.5 76.9 L188.6 78.5 L192.2 78.5 L197.6 77.1 L200.6 75.8 L200.6 72.2 L201.8 70.9 L204.2 71.8 L203.6 67.8 L209.0 66.6 L211.4 65.5 L209.0 64.3 L203.0 65.7 L201.0 63.6 L201.2 58.0 L205.4 52.7 L204.2 50.4 L201.2 52.7 L200.6 55.9 L196.4 60.6 L196.1 63.8 L197.8 65.9 L195.2 71.2 L194.6 74.0 L192.6 75.4 L191.0 75.6 L190.7 74.0 L189.0 68.9 L188.0 67.1 L185.1 69.8 L182.1 68.2 L181.5 63.1 L182.7 59.3 L186.3 56.2 L189.2 52.7 L191.6 46.8 L194.6 41.5 L198.2 37.2 L203.0 34.4 L206.3 33.3 L209.6 34.4 L212.5 36.5 L214.9 39.2 L219.7 40.9 L224.5 45.3 L223.9 48.9 L219.7 48.9 L214.9 47.7 L217.1 52.7 L217.3 54.9 L220.3 55.4 L223.3 53.5 L223.9 49.8 L228.1 48.3 L228.1 42.8 L230.5 43.8 L231.1 47.4 L235.2 43.8 L240.0 42.8 L244.2 41.5 L247.8 37.9 L252.6 39.5 L255.6 41.2 L257.4 35.4 L255.6 31.8 L258.0 27.6 L262.1 28.8 L262.7 34.4 L262.1 42.2 L263.9 43.8 L264.5 31.8 L267.5 31.8 L271.1 30.7 L272.3 26.8 L278.9 25.2 L279.5 20.5 L289.0 16.0 L295.0 13.7 L299.8 7.6 L303.4 13.7 L309.3 16.5 L311.1 24.8 L307.0 26.0 L311.7 27.6 L317.7 29.9 L323.1 28.8 L327.3 30.7 L330.3 35.1 L334.4 33.6 L339.8 34.4 L342.8 31.4 L350.0 32.5 L354.8 34.4 L366.7 37.2 L372.7 60.6 L366.7 65.5 L360.7 66.6 L354.8 66.6 L346.4 67.1 L341.6 72.2 L337.4 77.1 L339.8 78.9 L344.0 80.5 L343.4 84.3 L343.4 89.8 L340.4 93.2 L337.4 96.6 L334.4 98.5 L332.6 98.2 L330.9 99.8 L329.1 102.9 L327.9 103.4 L330.3 107.4 L330.0 109.9 L326.7 111.1 L326.7 107.4 L324.9 106.0 L324.9 103.5 L321.3 104.4 L320.7 101.7 L317.7 104.1 L316.3 105.2 L317.7 107.0 L321.9 107.1 L319.5 108.9 L318.1 110.4 L320.1 113.9 L321.3 116.0 L320.7 119.4 L318.3 123.4 L315.3 126.0 L311.7 127.5 L308.1 128.6 L307.0 130.0 L305.2 128.3 L303.0 129.8 L301.9 131.7 L305.2 135.4 L306.1 139.0 L305.8 140.8 L303.4 142.2 L301.0 144.2 L301.0 142.6 L298.6 141.4 L298.0 140.0 L296.2 139.4 L295.6 138.4 L295.0 139.6 L294.2 142.0 L295.4 145.0 L296.2 146.5 L298.6 148.0 L299.2 151.5 L300.0 152.8 L298.6 152.5 L296.6 151.2 L295.4 148.0 L294.4 146.2 L293.0 145.0 L293.2 142.0 L293.4 139.6 L292.3 136.6 L292.0 134.5 L290.2 135.1 L288.4 135.4 L288.2 132.3 L286.0 129.5 L285.2 127.4 L283.6 127.6 L281.9 128.1 L279.5 128.5 L278.9 130.4 L277.1 131.0 L273.8 134.4 L271.5 136.0 L271.3 138.7 L270.9 142.2 L268.9 144.0 L268.1 144.9 L266.7 142.9 L265.1 139.6 L263.9 136.2 L262.7 132.3 L262.4 129.1 L261.9 128.3 L260.1 129.4 L258.0 127.5 L259.1 126.9 L257.4 126.0 L255.6 124.3 L255.0 123.5 L249.6 123.8 L244.8 123.4 L243.6 121.4 L240.6 121.9 L238.2 120.7 L236.2 118.0 L234.1 117.0 L232.9 117.4 L233.5 119.4 L235.2 121.8 L235.6 124.0 L237.0 122.8 L237.2 124.7 L240.0 125.1 L242.4 122.7 L243.0 124.7 L245.6 125.8 L247.0 127.4 L244.8 129.9 L244.2 131.7 L241.2 133.9 L237.6 135.6 L233.5 137.8 L229.3 139.3 L227.5 139.4 L226.5 136.6 L225.7 134.1 L223.3 130.4 L222.1 128.4 L220.0 124.0 L217.3 120.1 L217.1 118.0 L216.4 115.6 L217.3 113.2 L218.5 109.2 L218.5 107.7 L214.9 108.6 L211.9 108.5 L209.0 107.9 L208.1 106.7 L207.2 104.4 L206.9 102.9 L210.2 101.4 L213.1 101.1 L217.3 99.8 L220.9 101.4 L225.1 100.6 L223.3 97.4 L220.3 94.9 L222.1 91.2 L217.3 93.2 L215.5 95.7 L215.5 93.2 L212.5 92.4 L210.8 94.4 L209.8 97.4 L209.0 100.3 L206.6 101.7 L204.2 101.7 L203.6 102.9 L202.7 102.1 L202.6 104.0 L204.2 106.0 L203.0 108.2 L201.2 107.4 L200.6 105.2 L198.8 102.5 L198.8 99.8 L195.8 98.2 L192.8 94.6 L191.9 93.9 L190.2 94.4 L190.4 96.6 L192.2 99.0 L194.6 100.1 L197.6 102.6 L195.8 102.3 L195.3 104.4 L194.6 106.0 L194.3 105.7 L194.6 103.7 L193.4 102.6 L192.2 101.7 L190.2 100.3 L188.0 98.4 L187.5 96.6 L186.0 95.9 L184.5 96.9 L182.7 98.0 L180.3 97.4 L179.1 99.0 L179.3 100.0 L176.5 101.7 L175.1 103.7 L175.7 104.8 L174.7 106.4 L173.1 107.7 L170.1 107.9 L168.8 108.9 L168.0 107.7 L166.5 107.3 L164.9 107.4Z M168.9 86.0 L171.3 85.6 L174.3 84.9 L177.1 83.9 L177.5 81.1 L175.9 80.5 L175.3 78.5 L173.7 76.5 L173.1 74.4 L172.2 73.7 L173.1 70.9 L170.7 70.7 L171.9 68.7 L169.5 68.7 L168.6 72.2 L169.2 74.4 L169.5 76.5 L171.7 76.7 L171.9 78.9 L170.1 79.9 L170.5 81.5 L169.3 82.8 L171.9 83.4 L170.1 84.3Z M168.3 82.0 L168.1 78.5 L168.6 76.9 L166.8 75.8 L165.3 77.5 L163.5 78.5 L164.1 80.5 L163.2 82.4 L164.1 83.4 L165.9 82.8Z M190.4 106.0 L194.1 105.7 L193.7 107.9 L190.4 106.6Z M185.3 101.4 L187.1 101.4 L187.0 104.1 L185.5 104.4Z M185.8 98.4 L186.9 98.4 L186.7 100.6 L185.9 100.3Z M203.6 109.5 L206.9 109.9 L206.8 110.4 L203.6 110.1Z M214.1 110.2 L216.7 109.5 L216.1 110.7 L214.3 110.9Z M237.0 33.6 L241.8 34.7 L244.2 29.9 L242.4 23.9 L247.2 16.5 L255.6 8.7 L257.4 11.2 L249.6 19.7 L244.8 26.0 L241.2 29.9 L237.0 30.7Z M189.8 -3.7 L193.4 9.2 L197.0 9.2 L201.8 2.2 L205.4 -10.2 L189.8 -10.2Z M289.0 -10.2 L291.4 2.2 L301.0 1.0 L298.6 -10.2Z M271.1 142.9 L273.3 145.6 L272.5 147.2 L271.2 147.4 L270.9 145.0Z M331.9 111.8 L333.8 109.6 L338.0 109.3 L339.2 107.1 L341.6 106.0 L342.8 102.9 L344.6 100.9 L345.2 103.7 L344.0 106.7 L343.8 109.3 L342.6 110.4 L339.2 110.9 L337.4 112.5 L334.4 111.4Z M330.9 112.5 L333.0 112.5 L332.6 115.3 L331.4 116.0 L330.6 113.5Z M333.8 111.9 L336.2 111.5 L336.0 112.5 L334.4 113.5Z M342.8 100.6 L344.6 97.9 L344.8 94.2 L349.1 96.6 L349.4 97.9 L346.7 99.8 L344.0 99.0Z M345.2 93.2 L346.7 88.0 L346.4 82.4 L345.8 77.9 L345.0 82.4 L345.2 88.0 L345.0 92.4Z M319.1 126.9 L320.1 123.8 L321.3 124.0 L320.1 127.9Z M305.4 131.4 L307.5 130.3 L308.1 130.9 L306.4 132.7Z M319.3 132.3 L321.5 132.5 L321.3 135.4 L320.7 137.2 L323.7 139.0 L323.1 139.3 L320.1 138.2 L318.9 136.0Z M321.3 146.2 L323.1 144.4 L325.5 143.0 L326.7 145.6 L325.5 147.6 L323.7 146.8Z M321.3 140.5 L323.7 140.8 L325.5 141.4 L324.9 142.6 L322.5 143.2 L321.3 142.0Z M315.6 144.4 L318.3 141.1 L318.7 141.8 L316.3 144.7Z M305.8 152.7 L308.1 152.5 L310.5 150.7 L312.9 148.6 L315.3 146.2 L317.7 148.6 L316.3 151.0 L316.5 153.3 L315.9 155.7 L314.1 159.0 L312.3 159.2 L308.7 158.4 L307.0 156.3 L305.8 154.1Z M289.4 147.9 L292.0 148.4 L295.6 151.8 L299.2 155.7 L302.2 158.4 L301.9 161.4 L300.4 161.4 L297.4 159.2 L295.4 156.3 L293.4 152.5 L291.4 150.4Z M301.2 162.5 L302.8 161.6 L305.2 162.4 L308.1 162.2 L310.2 162.8 L312.3 163.7 L312.1 164.8 L308.1 164.3 L304.6 163.7 L302.8 163.3Z M318.7 153.6 L320.1 153.0 L323.7 153.3 L324.9 152.5 L324.3 154.0 L320.1 153.9 L319.1 155.6 L320.7 155.6 L322.8 155.3 L320.9 156.6 L321.6 158.4 L322.5 160.4 L320.7 160.1 L320.1 157.7 L319.4 158.6 L319.4 161.1 L318.3 161.0 L318.3 158.6 L317.5 157.8Z M332.0 155.4 L335.6 155.4 L337.4 158.4 L340.4 156.4 L344.0 157.6 L348.2 159.0 L351.2 161.6 L352.1 163.4 L350.0 164.0 L347.6 163.6 L346.4 165.2 L344.0 165.3 L340.4 164.3 L340.4 161.6 L337.4 159.8 L334.4 159.2 L333.2 157.8Z M323.1 166.7 L324.9 164.8 L327.3 164.4 L326.1 165.8Z M314.1 164.4 L317.7 164.3 L322.2 164.3 L321.9 165.0 L317.7 165.0 L314.1 165.0Z M327.9 152.1 L329.1 152.7 L329.1 155.1 L328.1 154.5Z M328.5 158.0 L331.8 158.0 L331.4 158.9 L328.5 158.6Z M311.4 181.1 L312.0 186.3 L312.9 191.6 L313.8 194.4 L312.9 197.6 L316.5 198.6 L318.9 197.2 L323.1 197.1 L326.1 194.8 L329.7 193.8 L332.0 193.7 L335.6 195.5 L337.4 198.3 L340.1 195.8 L340.2 198.9 L342.2 200.1 L343.4 203.0 L347.0 204.2 L348.8 203.5 L350.6 204.6 L354.8 202.3 L356.3 196.9 L358.3 193.0 L358.9 188.9 L358.3 185.6 L355.7 182.4 L353.6 179.2 L350.3 177.3 L349.4 172.4 L347.0 171.6 L345.8 167.2 L344.8 170.0 L344.6 173.0 L343.8 175.5 L341.6 175.2 L339.2 173.4 L337.7 172.4 L338.0 169.1 L334.4 168.2 L332.0 169.0 L330.9 170.6 L330.3 172.4 L328.5 172.2 L326.9 171.2 L324.9 173.0 L323.1 175.2 L321.5 176.1 L320.1 178.0 L317.7 178.6 L314.7 179.5 L312.3 180.9Z M0.0 296.0 L19.0 293.7 L37.0 291.8 L50.0 289.5 L61.0 286.5 L68.0 287.0 L73.5 288.2 L78.0 286.5 L82.6 284.5 L85.5 279.5 L88.0 274.5 L91.5 272.0 L95.0 269.2 L97.5 264.5 L100.7 259.2 L102.5 258.0 L103.8 261.5 L103.5 271.5 L104.3 281.5 L104.3 289.5 L111.0 296.5 L118.8 304.5 L128.0 311.5 L133.0 311.5 L139.0 301.5 L146.0 292.5 L155.0 283.5 L167.0 280.0 L180.4 278.3 L195.0 275.5 L205.0 272.5 L216.7 270.1 L225.0 266.5 L231.0 263.5 L238.4 261.9 L245.0 263.5 L253.0 267.5 L259.0 270.5 L265.6 271.9 L271.0 268.5 L277.0 264.5 L283.8 262.8 L295.0 262.5 L310.0 261.5 L325.0 262.5 L340.0 264.5 L355.0 266.5 L355.0 312.5 L0.0 312.5Z"/>
<path fill="#a9c6f2" d="M232.3 99.8 L234.7 102.1 L234.1 105.2 L235.8 107.4 L239.8 107.7 L239.8 104.4 L238.6 101.4 L238.8 99.0 L236.4 95.2 L238.8 91.9 L234.7 92.4 L231.7 94.9Z M65.6 91.9 L70.3 88.9 L73.9 90.6 L74.5 92.4 L71.5 92.4 L68.0 92.0Z M70.6 99.8 L72.4 99.8 L73.3 94.1 L71.5 94.1 L70.3 96.6Z M74.5 93.2 L78.7 93.6 L79.9 95.7 L77.5 98.2 L75.7 96.6 L75.7 94.4Z M76.0 100.4 L81.1 98.5 L81.1 98.0 L77.5 99.0Z M80.3 97.7 L84.3 97.4 L84.1 96.2 L81.1 96.9Z M57.2 85.2 L60.2 85.2 L59.0 78.9 L57.2 80.5Z M35.7 63.1 L40.5 63.1 L45.2 58.8 L42.9 58.6 L38.1 60.6Z M26.1 52.7 L32.1 52.7 L34.5 48.3 L30.9 46.8 L27.3 49.8Z M213.7 154.9 L216.1 154.3 L216.5 157.2 L213.7 157.6Z M245.4 96.6 L248.4 96.6 L249.0 92.4 L246.0 93.2Z M211.9 65.5 L214.3 64.3 L213.7 61.8 L211.4 63.1Z M299.5 83.4 L301.6 83.0 L307.0 76.5 L306.4 74.8 L303.4 78.9 L300.4 81.5Z M263.3 94.9 L266.3 92.4 L269.9 92.7 L269.9 91.9 L265.1 91.5 L263.3 93.2Z"/>
<g fill="#a9c6f2" opacity="0.8"><ellipse cx="39.8" cy="74.3" rx="1.2" ry="0.4" transform="rotate(8 39.8 74.3)"/><ellipse cx="32.6" cy="60.9" rx="1.4" ry="0.5" transform="rotate(-49 32.6 60.9)"/><ellipse cx="43.2" cy="76.6" rx="0.6" ry="0.7" transform="rotate(45 43.2 76.6)"/><ellipse cx="47.3" cy="47.5" rx="1.1" ry="0.8" transform="rotate(-53 47.3 47.5)"/><ellipse cx="47.6" cy="67.0" rx="1.5" ry="0.3" transform="rotate(49 47.6 67.0)"/><ellipse cx="33.8" cy="66.3" rx="1.0" ry="0.8" transform="rotate(11 33.8 66.3)"/><ellipse cx="55.1" cy="73.4" rx="1.1" ry="0.9" transform="rotate(-13 55.1 73.4)"/><ellipse cx="32.7" cy="56.4" rx="1.1" ry="0.9" transform="rotate(3 32.7 56.4)"/><ellipse cx="50.9" cy="66.0" rx="0.8" ry="0.8" transform="rotate(-2 50.9 66.0)"/><ellipse cx="40.9" cy="71.5" rx="0.7" ry="1.0" transform="rotate(-50 40.9 71.5)"/><ellipse cx="47.6" cy="62.8" rx="1.4" ry="1.0" transform="rotate(-24 47.6 62.8)"/><ellipse cx="48.6" cy="76.5" rx="1.0" ry="0.4" transform="rotate(-17 48.6 76.5)"/><ellipse cx="34.4" cy="64.0" rx="0.5" ry="0.9" transform="rotate(37 34.4 64.0)"/><ellipse cx="47.0" cy="53.6" rx="1.3" ry="0.6" transform="rotate(-16 47.0 53.6)"/><ellipse cx="48.2" cy="61.0" rx="1.0" ry="1.1" transform="rotate(60 48.2 61.0)"/><ellipse cx="38.1" cy="57.0" rx="0.6" ry="1.0" transform="rotate(-21 38.1 57.0)"/><ellipse cx="49.8" cy="45.6" rx="1.3" ry="0.6" transform="rotate(-11 49.8 45.6)"/><ellipse cx="57.3" cy="68.5" rx="1.4" ry="0.6" transform="rotate(18 57.3 68.5)"/><ellipse cx="33.3" cy="76.9" rx="1.3" ry="0.4" transform="rotate(-29 33.3 76.9)"/><ellipse cx="42.1" cy="48.7" rx="1.0" ry="0.4" transform="rotate(-9 42.1 48.7)"/><ellipse cx="46.8" cy="50.0" rx="1.3" ry="1.1" transform="rotate(-25 46.8 50.0)"/><ellipse cx="51.7" cy="45.9" rx="1.2" ry="0.6" transform="rotate(-31 51.7 45.9)"/><ellipse cx="34.4" cy="73.6" rx="0.7" ry="0.5" transform="rotate(2 34.4 73.6)"/><ellipse cx="55.5" cy="73.4" rx="0.8" ry="0.4" transform="rotate(8 55.5 73.4)"/><ellipse cx="41.2" cy="61.5" rx="1.5" ry="0.9" transform="rotate(5 41.2 61.5)"/><ellipse cx="59.2" cy="58.4" rx="1.2" ry="0.7" transform="rotate(51 59.2 58.4)"/><ellipse cx="53.9" cy="50.4" rx="1.3" ry="0.7" transform="rotate(-9 53.9 50.4)"/><ellipse cx="42.0" cy="64.3" rx="0.9" ry="0.5" transform="rotate(-34 42.0 64.3)"/><ellipse cx="43.4" cy="75.5" rx="1.1" ry="0.4" transform="rotate(12 43.4 75.5)"/><ellipse cx="34.4" cy="75.7" rx="0.9" ry="0.3" transform="rotate(51 34.4 75.7)"/><ellipse cx="36.2" cy="67.6" rx="1.1" ry="1.2" transform="rotate(17 36.2 67.6)"/><ellipse cx="41.0" cy="75.1" rx="1.3" ry="1.2" transform="rotate(-1 41.0 75.1)"/><ellipse cx="44.6" cy="69.6" rx="0.6" ry="1.0" transform="rotate(34 44.6 69.6)"/><ellipse cx="37.9" cy="52.1" rx="0.7" ry="0.3" transform="rotate(7 37.9 52.1)"/><ellipse cx="40.9" cy="57.2" rx="1.4" ry="1.0" transform="rotate(-22 40.9 57.2)"/><ellipse cx="60.1" cy="50.8" rx="1.2" ry="0.5" transform="rotate(-14 60.1 50.8)"/><ellipse cx="57.9" cy="68.2" rx="0.7" ry="0.8" transform="rotate(4 57.9 68.2)"/><ellipse cx="40.0" cy="72.2" rx="1.3" ry="1.2" transform="rotate(49 40.0 72.2)"/><ellipse cx="62.2" cy="82.6" rx="0.8" ry="0.8" transform="rotate(-35 62.2 82.6)"/><ellipse cx="64.5" cy="80.8" rx="0.5" ry="0.3" transform="rotate(-25 64.5 80.8)"/><ellipse cx="64.2" cy="83.3" rx="0.9" ry="0.5" transform="rotate(43 64.2 83.3)"/><ellipse cx="67.5" cy="70.3" rx="1.2" ry="0.5" transform="rotate(-32 67.5 70.3)"/><ellipse cx="61.5" cy="79.0" rx="0.7" ry="0.6" transform="rotate(55 61.5 79.0)"/><ellipse cx="94.0" cy="86.1" rx="1.2" ry="0.6" transform="rotate(22 94.0 86.1)"/><ellipse cx="83.9" cy="73.1" rx="1.2" ry="0.9" transform="rotate(36 83.9 73.1)"/><ellipse cx="86.1" cy="68.0" rx="0.8" ry="0.8" transform="rotate(-49 86.1 68.0)"/><ellipse cx="97.6" cy="66.1" rx="0.8" ry="0.6" transform="rotate(-50 97.6 66.1)"/><ellipse cx="96.1" cy="83.0" rx="0.6" ry="0.4" transform="rotate(55 96.1 83.0)"/><ellipse cx="91.2" cy="73.2" rx="1.0" ry="0.7" transform="rotate(0 91.2 73.2)"/><ellipse cx="94.9" cy="79.5" rx="0.9" ry="0.4" transform="rotate(-59 94.9 79.5)"/><ellipse cx="97.6" cy="71.7" rx="0.6" ry="0.9" transform="rotate(-43 97.6 71.7)"/><ellipse cx="90.6" cy="68.4" rx="1.2" ry="0.5" transform="rotate(-28 90.6 68.4)"/><ellipse cx="86.4" cy="76.4" rx="1.1" ry="0.5" transform="rotate(9 86.4 76.4)"/><ellipse cx="90.3" cy="83.7" rx="1.2" ry="0.6" transform="rotate(-2 90.3 83.7)"/><ellipse cx="95.0" cy="69.7" rx="0.9" ry="0.9" transform="rotate(52 95.0 69.7)"/><ellipse cx="91.9" cy="75.8" rx="0.9" ry="0.3" transform="rotate(-4 91.9 75.8)"/><ellipse cx="97.1" cy="74.2" rx="1.1" ry="0.4" transform="rotate(-42 97.1 74.2)"/><ellipse cx="91.3" cy="71.7" rx="0.9" ry="0.5" transform="rotate(6 91.3 71.7)"/><ellipse cx="92.4" cy="76.8" rx="1.1" ry="1.0" transform="rotate(-53 92.4 76.8)"/><ellipse cx="66.4" cy="86.8" rx="1.0" ry="0.6" transform="rotate(11 66.4 86.8)"/><ellipse cx="62.5" cy="79.8" rx="0.5" ry="0.5" transform="rotate(4 62.5 79.8)"/><ellipse cx="72.8" cy="87.6" rx="0.7" ry="0.6" transform="rotate(43 72.8 87.6)"/><ellipse cx="70.5" cy="79.2" rx="0.9" ry="0.8" transform="rotate(60 70.5 79.2)"/><ellipse cx="78.6" cy="79.4" rx="1.0" ry="0.4" transform="rotate(-3 78.6 79.4)"/><ellipse cx="64.4" cy="88.5" rx="0.8" ry="0.3" transform="rotate(-30 64.4 88.5)"/><ellipse cx="209.0" cy="60.4" rx="0.7" ry="0.4" transform="rotate(39 209.0 60.4)"/><ellipse cx="204.4" cy="50.2" rx="1.0" ry="0.4" transform="rotate(53 204.4 50.2)"/><ellipse cx="204.1" cy="55.4" rx="1.0" ry="0.4" transform="rotate(53 204.1 55.4)"/><ellipse cx="209.9" cy="44.0" rx="1.1" ry="0.4" transform="rotate(-5 209.9 44.0)"/><ellipse cx="218.4" cy="56.6" rx="0.8" ry="0.5" transform="rotate(-49 218.4 56.6)"/><ellipse cx="213.9" cy="63.9" rx="0.9" ry="0.6" transform="rotate(-58 213.9 63.9)"/><ellipse cx="208.2" cy="54.4" rx="0.7" ry="0.9" transform="rotate(-46 208.2 54.4)"/><ellipse cx="218.3" cy="48.6" rx="1.2" ry="0.4" transform="rotate(-27 218.3 48.6)"/><ellipse cx="206.3" cy="46.0" rx="0.6" ry="0.8" transform="rotate(44 206.3 46.0)"/><ellipse cx="208.9" cy="45.8" rx="1.1" ry="0.5" transform="rotate(-41 208.9 45.8)"/><ellipse cx="210.8" cy="54.4" rx="0.8" ry="0.5" transform="rotate(-25 210.8 54.4)"/><ellipse cx="202.8" cy="50.8" rx="0.8" ry="0.3" transform="rotate(60 202.8 50.8)"/><ellipse cx="248.2" cy="63.1" rx="0.6" ry="0.6" transform="rotate(-32 248.2 63.1)"/><ellipse cx="251.3" cy="38.9" rx="0.7" ry="0.4" transform="rotate(10 251.3 38.9)"/><ellipse cx="273.2" cy="36.9" rx="0.8" ry="0.3" transform="rotate(30 273.2 36.9)"/><ellipse cx="262.0" cy="62.6" rx="0.5" ry="0.3" transform="rotate(-35 262.0 62.6)"/><ellipse cx="305.1" cy="47.1" rx="0.7" ry="0.4" transform="rotate(-3 305.1 47.1)"/><ellipse cx="278.3" cy="60.7" rx="0.6" ry="0.3" transform="rotate(-28 278.3 60.7)"/><ellipse cx="249.5" cy="65.0" rx="0.7" ry="0.8" transform="rotate(5 249.5 65.0)"/><ellipse cx="276.7" cy="36.2" rx="0.5" ry="0.7" transform="rotate(-5 276.7 36.2)"/><ellipse cx="288.0" cy="49.8" rx="0.9" ry="0.8" transform="rotate(-21 288.0 49.8)"/><ellipse cx="289.9" cy="34.3" rx="0.6" ry="0.7" transform="rotate(30 289.9 34.3)"/><ellipse cx="292.5" cy="61.7" rx="1.0" ry="0.8" transform="rotate(47 292.5 61.7)"/><ellipse cx="255.3" cy="63.6" rx="0.8" ry="0.4" transform="rotate(-40 255.3 63.6)"/><ellipse cx="250.6" cy="45.9" rx="0.6" ry="0.5" transform="rotate(-24 250.6 45.9)"/><ellipse cx="284.4" cy="44.9" rx="0.4" ry="0.3" transform="rotate(-26 284.4 44.9)"/><ellipse cx="274.9" cy="58.3" rx="1.0" ry="0.8" transform="rotate(10 274.9 58.3)"/><ellipse cx="267.3" cy="64.6" rx="0.9" ry="0.4" transform="rotate(-37 267.3 64.6)"/><ellipse cx="247.3" cy="54.9" rx="0.7" ry="0.5" transform="rotate(-35 247.3 54.9)"/><ellipse cx="262.6" cy="42.0" rx="0.5" ry="0.7" transform="rotate(-42 262.6 42.0)"/><ellipse cx="272.0" cy="64.4" rx="0.4" ry="0.4" transform="rotate(-31 272.0 64.4)"/><ellipse cx="252.4" cy="35.3" rx="0.9" ry="0.3" transform="rotate(54 252.4 35.3)"/><ellipse cx="284.8" cy="110.0" rx="0.6" ry="0.4" transform="rotate(3 284.8 110.0)"/><ellipse cx="274.0" cy="111.3" rx="0.7" ry="0.3" transform="rotate(46 274.0 111.3)"/><ellipse cx="284.8" cy="113.1" rx="0.6" ry="0.6" transform="rotate(4 284.8 113.1)"/><ellipse cx="273.8" cy="113.0" rx="0.7" ry="0.6" transform="rotate(42 273.8 113.0)"/><ellipse cx="271.4" cy="111.6" rx="0.8" ry="0.6" transform="rotate(28 271.4 111.6)"/><path d="M210.4 158.5 L211.9 161.6 L212.5 164.8 L211.4 164.6 L210.5 161.6Z"/><path d="M216.1 165.8 L217.3 167.6 L217.7 171.6 L216.7 171.2 L216.4 168.2Z"/></g>
</g>
<text x="15.6" y="82.2" font-size="9.5" font-weight="700" textLength="82.3" lengthAdjust="spacingAndGlyphs" fill="#fff" stroke="#fff" stroke-width="2.2" stroke-linejoin="round" opacity="0.85" filter="url(#halo)">NORTH AMERICA</text><text x="15.6" y="82.2" font-size="9.5" font-weight="700" textLength="82.3" lengthAdjust="spacingAndGlyphs" fill="#222">NORTH AMERICA</text>
<text x="186.7" y="87.1" font-size="9.5" font-weight="700" textLength="36.6" lengthAdjust="spacingAndGlyphs" fill="#fff" stroke="#fff" stroke-width="2.2" stroke-linejoin="round" opacity="0.85" filter="url(#halo)">EUROPE</text><text x="186.7" y="87.1" font-size="9.5" font-weight="700" textLength="36.6" lengthAdjust="spacingAndGlyphs" fill="#222">EUROPE</text>
<text x="289.2" y="78.3" font-size="9.5" font-weight="700" textLength="22.2" lengthAdjust="spacingAndGlyphs" fill="#fff" stroke="#fff" stroke-width="2.2" stroke-linejoin="round" opacity="0.85" filter="url(#halo)">ASIA</text><text x="289.2" y="78.3" font-size="9.5" font-weight="700" textLength="22.2" lengthAdjust="spacingAndGlyphs" fill="#222">ASIA</text>
<text x="189.7" y="150.9" font-size="9.5" font-weight="700" textLength="33.7" lengthAdjust="spacingAndGlyphs" fill="#fff" stroke="#fff" stroke-width="2.2" stroke-linejoin="round" opacity="0.85" filter="url(#halo)">AFRICA</text><text x="189.7" y="150.9" font-size="9.5" font-weight="700" textLength="33.7" lengthAdjust="spacingAndGlyphs" fill="#222">AFRICA</text>
<text x="75.7" y="177.8" font-size="9.5" font-weight="700" textLength="79.6" lengthAdjust="spacingAndGlyphs" fill="#fff" stroke="#fff" stroke-width="2.2" stroke-linejoin="round" opacity="0.85" filter="url(#halo)">SOUTH AMERICA</text><text x="75.7" y="177.8" font-size="9.5" font-weight="700" textLength="79.6" lengthAdjust="spacingAndGlyphs" fill="#222">SOUTH AMERICA</text>
<text x="317.2" y="184.3" font-size="9.5" font-weight="700" textLength="53.3" lengthAdjust="spacingAndGlyphs" fill="#fff" stroke="#fff" stroke-width="2.2" stroke-linejoin="round" opacity="0.85" filter="url(#halo)">AUSTRALIA</text><text x="317.2" y="184.3" font-size="9.5" font-weight="700" textLength="53.3" lengthAdjust="spacingAndGlyphs" fill="#222">AUSTRALIA</text>
<text x="216.3" y="291.7" font-size="9.5" font-weight="700" textLength="61.1" lengthAdjust="spacingAndGlyphs" fill="#fff" stroke="#fff" stroke-width="2.2" stroke-linejoin="round" opacity="0.85" filter="url(#halo)">ANTARCTICA</text><text x="216.3" y="291.7" font-size="9.5" font-weight="700" textLength="61.1" lengthAdjust="spacingAndGlyphs" fill="#222">ANTARCTICA</text>
<text x="107.2" y="115.4" font-size="9.3" font-weight="400" textLength="35.3" lengthAdjust="spacingAndGlyphs" fill="#4d6fa8">Atlantic</text>
<text x="111.5" y="125.4" font-size="9.3" font-weight="400" textLength="27.0" lengthAdjust="spacingAndGlyphs" fill="#4d6fa8">Ocean</text>
<text x="256.5" y="179.3" font-size="9.3" font-weight="400" textLength="30.0" lengthAdjust="spacingAndGlyphs" fill="#4d6fa8">Indian</text>
<text x="257.5" y="189.3" font-size="9.3" font-weight="400" textLength="28.0" lengthAdjust="spacingAndGlyphs" fill="#4d6fa8">Ocean</text>
<text x="291.0" y="267.0" font-size="12" font-weight="400" textLength="57.0" lengthAdjust="spacingAndGlyphs" fill="#fff" stroke="#fff" stroke-width="2.2" stroke-linejoin="round" opacity="0.85" filter="url(#halo)">10000 miles</text><text x="291.0" y="267.0" font-size="12" font-weight="400" textLength="57.0" lengthAdjust="spacingAndGlyphs" fill="#222">10000 miles</text>
<rect x="142.4" y="273.9" width="204.4" height="5.6" fill="#3fb4f2" stroke="#2a2a2a" stroke-width="1"/>
<text x="131.2" y="297.7" font-size="10.5" font-weight="400" textLength="133.2" lengthAdjust="spacingAndGlyphs" fill="#fff" stroke="#fff" stroke-width="2.2" stroke-linejoin="round" opacity="0.85" filter="url(#halo)">© 2025 Microsoft Corporation</text><text x="131.2" y="297.7" font-size="10.5" font-weight="400" textLength="133.2" lengthAdjust="spacingAndGlyphs" fill="#333">© 2025 Microsoft Corporation</text>
<text x="275.2" y="297.7" font-size="10.5" font-weight="400" textLength="72.0" lengthAdjust="spacingAndGlyphs" fill="#fff" stroke="#fff" stroke-width="2.2" stroke-linejoin="round" opacity="0.85" filter="url(#halo)">© 2025 TomTom</text><text x="275.2" y="297.7" font-size="10.5" font-weight="400" textLength="72.0" lengthAdjust="spacingAndGlyphs" fill="#333">© 2025 TomTom</text>
<g><path d="M13.7 275.5 l4.2 1.5 v11 l5.4 -3.1 l-2.6 -1.2 l-1.7 -4.4 l9.2 3.3 v4.3 l-10.3 6 l-4.2 -2.4 z" fill="#fff" fill-opacity="0.6" stroke="#8f98ab" stroke-width="0.9" stroke-linejoin="round"/><text x="32.4" y="292.1" font-size="19" font-weight="700" textLength="28.4" lengthAdjust="spacingAndGlyphs" fill="#fff" fill-opacity="0.62" stroke="#8f98ab" stroke-width="0.8" paint-order="stroke">bing</text></g>
<g><path d="M168.8 135.0 L176.4 154.3 L184.0 135.0 Z" fill="#231f20"/><circle cx="176.4" cy="115.8" r="20.3" fill="none" stroke="#231f20" stroke-width="6.5"/></g>
<rect x="5.3" y="5.8" width="204.2" height="24.9" rx="12.4" fill="#fff" stroke="#666" stroke-width="1"/>
<text x="22.9" y="22.6" font-size="12" font-weight="400" textLength="86.1" lengthAdjust="spacingAndGlyphs" fill="#8c8c8c">Search locations</text>
<circle cx="193.6" cy="18.2" r="8.6" fill="#003366"/><path d="M189.3 18.2 h8.6 M193.6 13.9 v8.6" stroke="#fff" stroke-width="1.3"/>
<circle cx="230.1" cy="18.2" r="9" fill="#ed1c24"/><line x1="230.1" y1="18.9" x2="230.10" y2="14.00" stroke="#fff" stroke-width="2.1" stroke-linecap="round"/><line x1="230.1" y1="18.9" x2="234.76" y2="17.39" stroke="#fff" stroke-width="2.1" stroke-linecap="round"/><line x1="230.1" y1="18.9" x2="232.98" y2="22.86" stroke="#fff" stroke-width="2.1" stroke-linecap="round"/><line x1="230.1" y1="18.9" x2="227.22" y2="22.86" stroke="#fff" stroke-width="2.1" stroke-linecap="round"/><line x1="230.1" y1="18.9" x2="225.44" y2="17.39" stroke="#fff" stroke-width="2.1" stroke-linecap="round"/>
<rect x="247.8" y="10.6" width="72.8" height="22.0" rx="8" fill="#10182c" opacity="0.75" filter="url(#sh)"/>
<rect x="244.8" y="7.1" width="72.8" height="22.0" rx="8" fill="url(#bg1)"/>
<text x="250.2" y="22.5" font-size="11.5" font-weight="400" textLength="26.3" lengthAdjust="spacingAndGlyphs" fill="#9a9a9a">Aerial</text>
<text x="280.0" y="22.5" font-size="11.5" font-weight="700" textLength="31.8" lengthAdjust="spacingAndGlyphs" fill="#636363">Road</text>
<circle cx="334.0" cy="21.7" r="9" fill="#10182c" opacity="0.8" filter="url(#sh)"/>
<circle cx="331.0" cy="18.2" r="8.6" fill="url(#bg1)"/><path d="M326.8 18.2 h8.4 M331.0 14.0 v8.4" stroke="#4a4a4a" stroke-width="2.4"/>
<clipPath id="c3"><rect x="0" y="0" width="348.0" height="310.0"/></clipPath>
<circle cx="354.8" cy="21.7" r="9" fill="#10182c" opacity="0.38" filter="url(#sh)"/>
<circle cx="352.8" cy="18.2" r="8.8" fill="url(#bg1)" clip-path="url(#c3)"/>
</g>
</svg>
</div></div>
<div class="a" style="left:982px;top:28px;width:9px;height:851px;background:#a2a2a6;"></div>
<div class="a" style="left:984px;top:41px;width:6.2000000000000455px;height:781px;background:#003366;"></div>
<svg class="a" style="left:982px;top:28px" width="9" height="12" viewBox="0 0 9 12"><path d="M2.4 10.5 L6.4 1.5 L10.5 10.5 Z" fill="#003366"/></svg>
<svg class="a" style="left:982px;top:866px" width="9" height="10" viewBox="0 0 9 10"><path d="M2 1 L10 1 L6 8.5 Z" fill="#003366"/></svg>
<div id="tx">
<span class="t" id="t0" style="left:377.4px;top:7.0px;height:20px;line-height:20px;font-size:12px;font-weight:400;color:#333;letter-spacing:-0.028px;">Schedule Dispatch - Main Zone</span>
<span class="t" id="t1" style="left:65px;top:53.0px;height:20px;line-height:20px;font-size:12px;font-weight:400;color:#8a8a8a;letter-spacing:-0.339px;">Search</span>
<span class="t" id="t2" style="left:53px;top:83.0px;height:20px;line-height:20px;font-size:12px;font-weight:700;color:#9cafc8;letter-spacing:-0.049px;">New Dispatch</span>
<span class="t" id="t3" style="left:53px;top:99.0px;height:20px;line-height:20px;font-size:12px;font-weight:700;color:#9cafc8;letter-spacing:-0.253px;">Location :</span>
<span class="t" id="t4" style="left:53px;top:114.7px;height:20px;line-height:20px;font-size:12px;font-weight:700;color:#9cafc8;letter-spacing:0.197px;">Start Time : 4/4/2025 9:00:00 AM</span>
<span class="t" id="t5" style="left:53px;top:130.5px;height:20px;line-height:20px;font-size:12px;font-weight:700;color:#9cafc8;letter-spacing:-0.192px;">End Time :</span>
<span class="t" id="t6" style="left:114.7px;top:130.5px;height:20px;line-height:20px;font-size:12px;font-weight:400;color:#9cafc8;letter-spacing:-0.022px;">No End</span>
<span class="t" id="t7" style="left:53px;top:171.6px;height:20px;line-height:20px;font-size:12px;font-weight:700;color:#fff;letter-spacing:-0.070px;">Patrol - Door Check</span>
<span class="t" id="t8" style="left:53px;top:187.7px;height:20px;line-height:20px;font-size:12px;font-weight:700;color:#fff;letter-spacing:-0.249px;">Location : Resolver Inc</span>
<span class="t" id="t9" style="left:53px;top:203.8px;height:20px;line-height:20px;font-size:12px;font-weight:700;color:#fff;letter-spacing:0.160px;">Start Time : 4/1/2025 3:00:00 PM</span>
<span class="t" id="t10" style="left:53px;top:219.6px;height:20px;line-height:20px;font-size:12px;font-weight:700;color:#fff;letter-spacing:-0.192px;">End Time :</span>
<span class="t" id="t11" style="left:114.5px;top:219.6px;height:20px;line-height:20px;font-size:12px;font-weight:400;color:#fff;letter-spacing:-0.035px;">4/11/2025 3:00:00 PM</span>
<span class="t" id="t12" style="left:53px;top:236.7px;height:20px;line-height:20px;font-size:13px;font-weight:400;color:#a0a0a0;letter-spacing:-0.303px;">Enabled</span>
<span class="t" id="t13" style="left:322px;top:35.5px;height:20px;line-height:20px;font-size:12px;font-weight:400;color:#1a1a1a;letter-spacing:-0.130px;">Schedule Time</span>
<span class="t" id="t14" style="left:319px;top:57.0px;height:20px;line-height:20px;font-size:12px;font-weight:400;color:#1a1a1a;letter-spacing:-0.069px;">Start Time</span>
<span class="t" id="t15" style="left:324.5px;top:81.0px;height:20px;line-height:20px;font-size:12px;font-weight:400;color:#333;letter-spacing:0.098px;">4/4/2025</span>
<span class="t" id="t16" style="left:466px;top:78.8px;height:20px;line-height:20px;font-size:12px;font-weight:400;color:#333;letter-spacing:-0.160px;">9:00AM</span>
<span class="t" id="t17" style="left:319px;top:106.6px;height:20px;line-height:20px;font-size:12px;font-weight:400;color:#1a1a1a;letter-spacing:0.010px;">Time Zone</span>
<span class="t" id="t18" style="left:324px;top:133.0px;height:20px;line-height:20px;font-size:12px;font-weight:400;color:#1a1a1a;letter-spacing:-0.327px;">(UTC-05:00) Eastern Time (US &amp; Canada)</span>
<span class="t" id="t19" style="left:613px;top:35.5px;height:20px;line-height:20px;font-size:12px;font-weight:400;color:#1a1a1a;letter-spacing:-0.253px;">Recurrence</span>
<span class="t" id="t20" style="left:629px;top:50.1px;height:20px;line-height:20px;font-size:12px;font-weight:400;color:#1a1a1a;letter-spacing:0.000px;">None</span>
<span class="t" id="t21" style="left:629px;top:71.5px;height:20px;line-height:20px;font-size:12px;font-weight:400;color:#1a1a1a;letter-spacing:0.000px;">Daily</span>
<span class="t" id="t22" style="left:629px;top:92.8px;height:20px;line-height:20px;font-size:12px;font-weight:400;color:#1a1a1a;letter-spacing:0.000px;">Weekly</span>
<span class="t" id="t23" style="left:629px;top:114.0px;height:20px;line-height:20px;font-size:12px;font-weight:400;color:#1a1a1a;letter-spacing:0.000px;">Monthly</span>
<span class="t" id="t24" style="left:629px;top:135.2px;height:20px;line-height:20px;font-size:12px;font-weight:400;color:#1a1a1a;letter-spacing:0.000px;">Yearly</span>
<span class="t" id="t25" style="left:813.6px;top:49.3px;height:20px;line-height:20px;font-size:12px;font-weight:400;color:#1a1a1a;letter-spacing:-0.090px;">Delete when schedule ends</span>
<span class="t" id="t26" style="left:723px;top:71.5px;height:20px;line-height:20px;font-size:12px;font-weight:400;color:#1a1a1a;letter-spacing:-0.265px;">Recurrence Range</span>
<span class="t" id="t27" style="left:739px;top:86.7px;height:20px;line-height:20px;font-size:12px;font-weight:400;color:#1a1a1a;letter-spacing:0.000px;">No End</span>
<span class="t" id="t28" style="left:739px;top:110.2px;height:20px;line-height:20px;font-size:12px;font-weight:400;color:#1a1a1a;letter-spacing:0.000px;">End After</span>
<span class="t" id="t29" style="left:739px;top:134.7px;height:20px;line-height:20px;font-size:12px;font-weight:400;color:#1a1a1a;letter-spacing:0.000px;">End By</span>
<span class="t" id="t30" style="left:827px;top:110.5px;height:20px;line-height:20px;font-size:12px;font-weight:400;color:#8a8a8a;letter-spacing:0.000px;">1</span>
<span class="t" id="t31" style="left:873.6px;top:110.8px;height:20px;line-height:20px;font-size:12px;font-weight:400;color:#1a1a1a;letter-spacing:-0.143px;">occurrences</span>
<span class="t" id="t32" style="left:828.5px;top:135.0px;height:20px;line-height:20px;font-size:12px;font-weight:400;color:#b0b0b0;letter-spacing:0.123px;">4/17/2025</span>
<span class="t" id="t33" style="left:927px;top:132.8px;height:20px;line-height:20px;font-size:12px;font-weight:400;color:#747474;letter-spacing:-0.247px;">10:41AM</span>
<span class="t" id="t34" style="left:322px;top:164.5px;height:20px;line-height:20px;font-size:12px;font-weight:400;color:#1a1a1a;letter-spacing:-0.253px;">Recurrence</span>
<span class="t" id="t35" style="left:338.5px;top:187.3px;height:20px;line-height:20px;font-size:12px;font-weight:400;color:#1a1a1a;letter-spacing:-0.181px;">Day</span>
<span class="t" id="t36" style="left:338.5px;top:217.3px;height:20px;line-height:20px;font-size:12px;font-weight:400;color:#1a1a1a;letter-spacing:-0.062px;">The</span>
<span class="t" id="t37" style="left:399.8px;top:187.5px;height:20px;line-height:20px;font-size:12px;font-weight:400;color:#1a1a1a;letter-spacing:0.000px;">7</span>
<span class="t" id="t38" style="left:402px;top:215.5px;height:20px;line-height:20px;font-size:12px;font-weight:400;color:#1a1a1a;letter-spacing:-0.266px;">First</span>
<span class="t" id="t39" style="left:561px;top:187.6px;height:20px;line-height:20px;font-size:12px;font-weight:400;color:#1a1a1a;letter-spacing:0.039px;">of every</span>
<span class="t" id="t40" style="left:635.5px;top:187.5px;height:20px;line-height:20px;font-size:12px;font-weight:400;color:#1a1a1a;letter-spacing:0.000px;">1</span>
<span class="t" id="t41" style="left:561px;top:215.5px;height:20px;line-height:20px;font-size:12px;font-weight:400;color:#1a1a1a;letter-spacing:-0.201px;">Sunday</span>
<span class="t" id="t42" style="left:718.3px;top:187.8px;height:20px;line-height:20px;font-size:12px;font-weight:400;color:#1a1a1a;letter-spacing:0.107px;">month(s)</span>
<span class="t" id="t43" style="left:720px;top:218.0px;height:20px;line-height:20px;font-size:12px;font-weight:400;color:#1a1a1a;letter-spacing:0.039px;">of every</span>
<span class="t" id="t44" style="left:774.5px;top:218.0px;height:20px;line-height:20px;font-size:12px;font-weight:400;color:#8a8a8a;letter-spacing:0.000px;">1</span>
<span class="t" id="t45" style="left:853.4px;top:218.0px;height:20px;line-height:20px;font-size:12px;font-weight:400;color:#1a1a1a;letter-spacing:0.107px;">month(s)</span>
<span class="t" id="t46" style="left:313.5px;top:260.3px;height:20px;line-height:20px;font-size:12px;font-weight:700;color:#111;letter-spacing:0.045px;">Enabled</span>
<span class="t" id="t47" style="left:319.7px;top:292.6px;height:20px;line-height:20px;font-size:12px;font-weight:400;color:#1a1a1a;letter-spacing:-0.104px;">Schedule Dispatch</span>
<span class="t" id="t48" style="left:323.2px;top:315.0px;height:20px;line-height:20px;font-size:12px;font-weight:400;color:#1a1a1a;letter-spacing:-0.086px;">Door Check</span>
<span class="t" id="t49" style="left:319.7px;top:344.7px;height:20px;line-height:20px;font-size:12px;font-weight:400;color:#1a1a1a;letter-spacing:0.059px;">Work Zone</span>
<span class="t" id="t50" style="left:323.2px;top:369.0px;height:20px;line-height:20px;font-size:12px;font-weight:400;color:#1a1a1a;letter-spacing:-0.636px;">GG</span>
<span class="t" id="t51" style="left:319.7px;top:397.0px;height:20px;line-height:20px;font-size:12px;font-weight:400;color:#1a1a1a;letter-spacing:0.037px;">Template</span>
<span class="t" id="t52" style="left:332px;top:423.3px;height:20px;line-height:20px;font-size:12px;font-weight:400;color:#9a9a9a;letter-spacing:-0.087px;">Search templates</span>
<span class="t" id="t53" style="left:319.7px;top:449.2px;height:20px;line-height:20px;font-size:12px;font-weight:400;color:#1a1a1a;letter-spacing:-0.054px;">Call Category</span>
<span class="t" id="t54" style="left:333px;top:479.5px;height:20px;line-height:20px;font-size:12px;font-weight:400;color:#333;letter-spacing:0.094px;">Construction</span>
<span class="t" id="t55" style="left:323.2px;top:513.0px;height:20px;line-height:20px;font-size:12px;font-weight:400;color:#1a1a1a;letter-spacing:-0.248px;">Security Response</span>
<span class="t" id="t56" style="left:323.2px;top:549.0px;height:20px;line-height:20px;font-size:12px;font-weight:400;color:#1a1a1a;letter-spacing:0.094px;">Construction</span>
<span class="t" id="t57" style="left:319.7px;top:612.6px;height:20px;line-height:20px;font-size:12px;font-weight:400;color:#1a1a1a;letter-spacing:0.207px;">Priority</span>
<span class="t" id="t58" style="left:323.2px;top:637.0px;height:20px;line-height:20px;font-size:12px;font-weight:400;color:#1a1a1a;letter-spacing:0.302px;">Medium</span>
<span class="t" id="t59" style="left:319.7px;top:665.6px;height:20px;line-height:20px;font-size:12px;font-weight:400;color:#1a1a1a;letter-spacing:-0.230px;">Call Source</span>
<span class="t" id="t60" style="left:319.7px;top:719.0px;height:20px;line-height:20px;font-size:12px;font-weight:400;color:#1a1a1a;letter-spacing:-0.065px;">Initiated By Person</span>
<span class="t" id="t61" style="left:332px;top:745.5px;height:20px;line-height:20px;font-size:12px;font-weight:400;color:#9a9a9a;letter-spacing:-0.182px;">Search persons</span>
<span class="t" id="t62" style="left:319.7px;top:770.3px;height:20px;line-height:20px;font-size:12px;font-weight:400;color:#1a1a1a;letter-spacing:0.116px;">Contact Number</span>
<span class="t" id="t63" style="left:319.7px;top:822.2px;height:20px;line-height:20px;font-size:12px;font-weight:400;color:#1a1a1a;letter-spacing:0.017px;">Default callsign:</span>
<span class="t" id="t64" style="left:570px;top:612.7px;height:20px;line-height:20px;font-size:12px;font-weight:400;color:#1a1a1a;letter-spacing:0.088px;">Description</span>
<span class="t" id="t65" style="left:570px;top:719.0px;height:20px;line-height:20px;font-size:12px;font-weight:400;color:#1a1a1a;letter-spacing:0.138px;">Initial Notes</span>
</div>
</body></html>
